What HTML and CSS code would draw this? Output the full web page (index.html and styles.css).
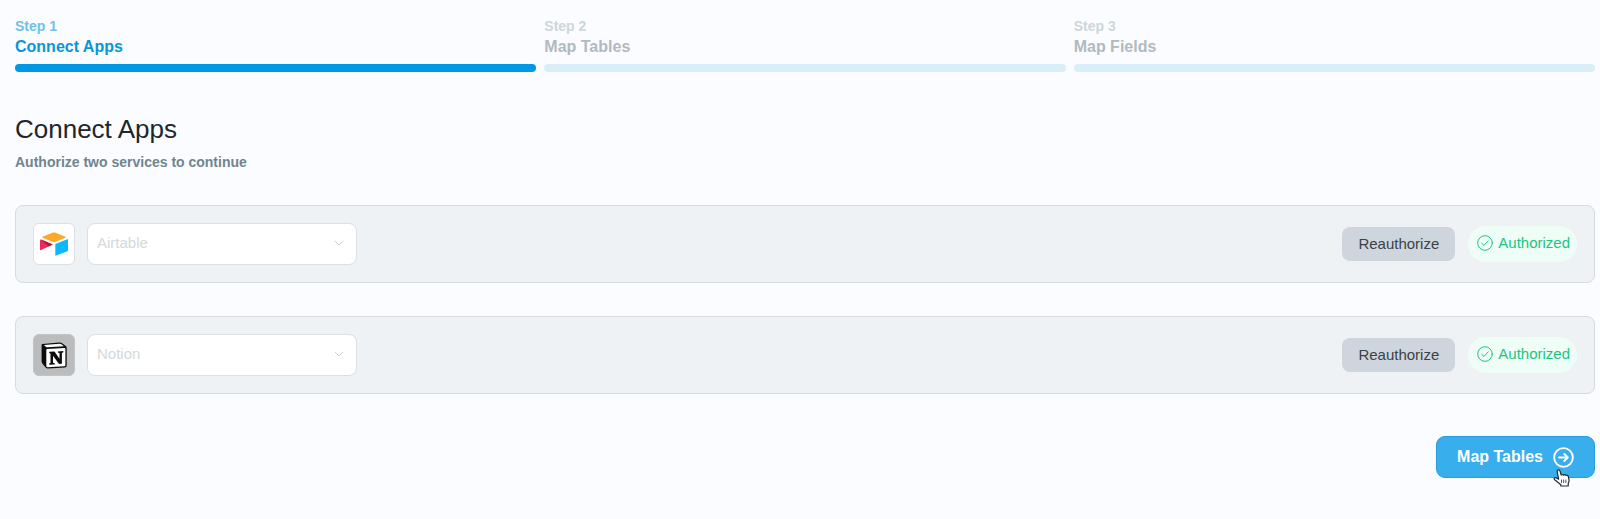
FILE: index.html
```html
<!DOCTYPE html>
<html lang="en">
<head>
<meta charset="utf-8">
<meta name="viewport" content="width=device-width, initial-scale=1">
<title>Connect Apps</title>
<link rel="stylesheet" href="styles.css">
</head>
<body>
<main class="page">
  <ol class="steps">
    <li class="step step-active" aria-current="step">
      <span class="step-number">Step 1</span>
      <span class="step-name">Connect Apps</span>
      <span class="step-bar"></span>
    </li>
    <li class="step">
      <span class="step-number">Step 2</span>
      <span class="step-name">Map Tables</span>
      <span class="step-bar"></span>
    </li>
    <li class="step">
      <span class="step-number">Step 3</span>
      <span class="step-name">Map Fields</span>
      <span class="step-bar"></span>
    </li>
  </ol>

  <header class="intro">
    <h1 class="title">Connect Apps</h1>
    <p class="subtitle">Authorize two services to continue</p>
  </header>

  <div class="services">
    <section class="service">
      <div class="logo">
        <svg width="28" height="24" viewBox="0 0 28 24" aria-hidden="true">
          <path d="M2.500 4.800 L13 .6 Q14 .2 15 .6 L25.500 4.800 Q26.200 5.300 25.500 5.700 L15 10 Q14 10.400 13 10 L2.500 5.700 Q1.800 5.300 2.500 4.800Z" fill="#fba92e"/>
          <path d="M15.300 12.600 Q15.300 12 15.900 11.800 L27.200 7.300 Q28 7.100 28 7.900 V18.300 Q28 18.900 27.400 19.200 L16.200 23.600 Q15.300 23.900 15.300 23Z" fill="#0bb8fb"/>
          <path d="M0 8.200 Q.2 7.300 1.100 7.600 L12.700 12.500 L1.100 18.100 Q0 18.500 0 17.500Z" fill="#ee2b58"/>
          <path d="M1.100 7.600 L12.700 12.500 L8.800 14.400Z" fill="#b9153c"/>
        </svg>
      </div>
      <div class="picker">
        <select class="picker-select" aria-label="First service" disabled><option>Airtable</option></select>
        <svg class="picker-arrow" width="10" height="6" viewBox="0 0 10 6" aria-hidden="true"><path d="M1 1l4 4 4-4"/></svg>
      </div>
      <div class="actions">
        <button class="reauthorize" type="button">Reauthorize</button>
        <span class="status">
          <svg class="status-icon" width="16" height="16" viewBox="0 0 16 16" aria-hidden="true"><circle cx="8" cy="8" r="7.300"/><path d="M4.800 8.300l2.200 2.100 4.200-4.500"/></svg>
          Authorized
        </span>
      </div>
    </section>

    <section class="service">
      <div class="logo logo-gray">
        <svg width="26" height="27" viewBox="0 0 26 27" aria-hidden="true">
          <path d="M1.500 1.900 L18 .6 Q20 .4 21.500 1.500 L25 4.200 Q25.700 4.800 25.700 5.800 V23.500 Q25.700 25.500 23.800 25.600 L7 26.600 Q5.500 26.700 4.600 25.600 L1.300 21.500 Q.6 20.600 .6 19.500 V3 Q.6 2 1.500 1.900Z" fill="#0c0c0c"/>
          <path d="M3 3 L18.300 1.800 Q19.500 1.700 20.300 2.300 L22.900 4.200 L6.600 5.200 Q5.500 5.300 4.800 4.700Z" fill="#fff"/>
          <path d="M6.200 6.900 L23.300 5.900 Q24.400 5.800 24.400 6.900 V23 Q24.400 24.200 23.300 24.300 L6.500 25.200 Q5.300 25.300 5.300 24.100 V8 Q5.300 7 6.200 6.900Z" fill="#fff"/>
          <path d="M8.300 9.800 L13.500 9.500 L18.500 16.800 V11 L16.800 10.600 V9.400 L22.300 9 V10.300 L20.900 10.900 V21.800 L18 22 L12 13.700 V20.800 L13.700 21.300 V22.500 L8.200 22.800 V21.600 L9.500 21 V11.600 L8.300 11.200Z" fill="#0c0c0c"/>
        </svg>
      </div>
      <div class="picker">
        <select class="picker-select" aria-label="Second service" disabled><option>Notion</option></select>
        <svg class="picker-arrow" width="10" height="6" viewBox="0 0 10 6" aria-hidden="true"><path d="M1 1l4 4 4-4"/></svg>
      </div>
      <div class="actions">
        <button class="reauthorize" type="button">Reauthorize</button>
        <span class="status">
          <svg class="status-icon" width="16" height="16" viewBox="0 0 16 16" aria-hidden="true"><circle cx="8" cy="8" r="7.300"/><path d="M4.800 8.300l2.200 2.100 4.200-4.500"/></svg>
          Authorized
        </span>
      </div>
    </section>
  </div>

  <footer class="footer">
    <button class="next" type="button">
      Map Tables
      <svg class="next-icon" width="21" height="21" viewBox="0 0 22 22" aria-hidden="true"><circle cx="11" cy="11" r="9.800"/><path d="M6.300 11h9M11.800 7.300l3.700 3.700-3.700 3.700"/></svg>
    </button>
    <svg class="pointer" width="18" height="18" viewBox="0 0 18 18" aria-hidden="true">
      <path d="M5 1 Q6.600 .6 7 2 L8.200 6 Q9.500 5 10.500 6.200 Q12 5.100 13 6.400 Q14.800 5.800 15.300 7.500 L16 10.500 Q16.300 12.500 15.200 14.500 V17 H7.800 V15.700 L2 11 Q.6 9.600 1.600 8.900 Q2.800 8.200 4 9.200 L5.600 10.200 L4.200 2.600 Q4 1.300 5 1Z" fill="#fff" stroke="#222a30" stroke-width="1.200" stroke-linejoin="round"/>
      <path d="M8.500 10.500v3.500M10.700 10.500v3.500M12.900 10.500v3.500" stroke="#222a30" stroke-width=".8"/>
    </svg>
  </footer>
</main>
</body>
</html>
```

FILE: styles.css
```css
* {
  box-sizing: border-box;
}

body {
  margin: 0;
  background: #fbfcff;
  color: #20262b;
  font-family: "Liberation Sans", Arial, sans-serif;
  font-size: 15px;
  line-height: 20px;
}

button,
select {
  font: inherit;
}

.page {
  padding: 16px 5px 40px 15px;
}

.steps {
  display: grid;
  grid-template-columns: repeat(3, 1fr);
  gap: 8px;
  margin: 0;
  padding: 0;
  list-style: none;
}

.step {
  display: flex;
  flex-direction: column;
  color: #b0babf;
  font-weight: bold;
}

.step-number {
  color: #ced6da;
  font-size: 14px;
}

.step-name {
  font-size: 16px;
  line-height: 22px;
}

.step-bar {
  height: 8px;
  margin-top: 6px;
  border-radius: 4px;
  background: #daeefa;
}

.step-active {
  color: #0b95d9;
}

.step-active .step-number {
  color: #70c1ea;
}

.step-active .step-bar {
  background: #0098e3;
}

.intro {
  margin: 41px 0 33px;
}

.title {
  margin: 0;
  font-size: 26px;
  font-weight: normal;
  line-height: 32px;
}

.subtitle {
  margin: 7px 0 0;
  color: #6f858d;
  font-size: 14px;
  font-weight: bold;
}

.services {
  display: grid;
  gap: 33px;
}

.service {
  display: flex;
  align-items: center;
  gap: 12px;
  padding: 17px;
  border: 1px solid #d7dadf;
  border-radius: 8px;
  background: #eff2f4;
}

.logo {
  display: grid;
  place-items: center;
  width: 42px;
  height: 42px;
  border: 1px solid #dcdfe3;
  border-radius: 6px;
  background: #fff;
}

.logo-gray {
  border-color: #c1c3c4;
  background: #bbbcbd;
}

.picker {
  position: relative;
  width: 270px;
}

.picker-select {
  display: block;
  width: 100%;
  height: 42px;
  padding: 0 30px 2px 9px;
  border: 1px solid #dcdfe3;
  border-radius: 8px;
  appearance: none;
  background: #fff;
  color: #d3d9dc;
  opacity: 1;
}

.picker-arrow {
  position: absolute;
  top: 17px;
  right: 13px;
  fill: none;
  stroke: #cfd4d8;
  stroke-linecap: round;
  stroke-linejoin: round;
}

.actions {
  display: flex;
  align-items: center;
  gap: 13px;
  margin-left: auto;
}

.reauthorize {
  height: 34px;
  padding: 0 16px;
  border: 0;
  border-radius: 8px;
  background: #ced5dc;
  color: #3a4349;
}

.status {
  display: flex;
  align-items: center;
  gap: 5px;
  height: 36px;
  padding: 0 7px 2px 9px;
  border-radius: 18px;
  background: #effdf7;
  color: #1bc581;
}

.status-icon {
  fill: none;
  stroke: currentColor;
  stroke-linecap: round;
  stroke-linejoin: round;
}

.footer {
  position: relative;
  display: flex;
  justify-content: flex-end;
  margin-top: 42px;
}

.next {
  display: flex;
  align-items: center;
  gap: 10px;
  height: 42px;
  padding: 0 20px;
  border: 1px solid #2a9cda;
  border-radius: 9px;
  background: #38aeec;
  color: #fff;
  font-size: 16px;
  font-weight: bold;
}

.next-icon {
  fill: none;
  stroke: currentColor;
  stroke-width: 2;
  stroke-linecap: round;
  stroke-linejoin: round;
}

.pointer {
  position: absolute;
  top: 33px;
  right: 24px;
}
```
